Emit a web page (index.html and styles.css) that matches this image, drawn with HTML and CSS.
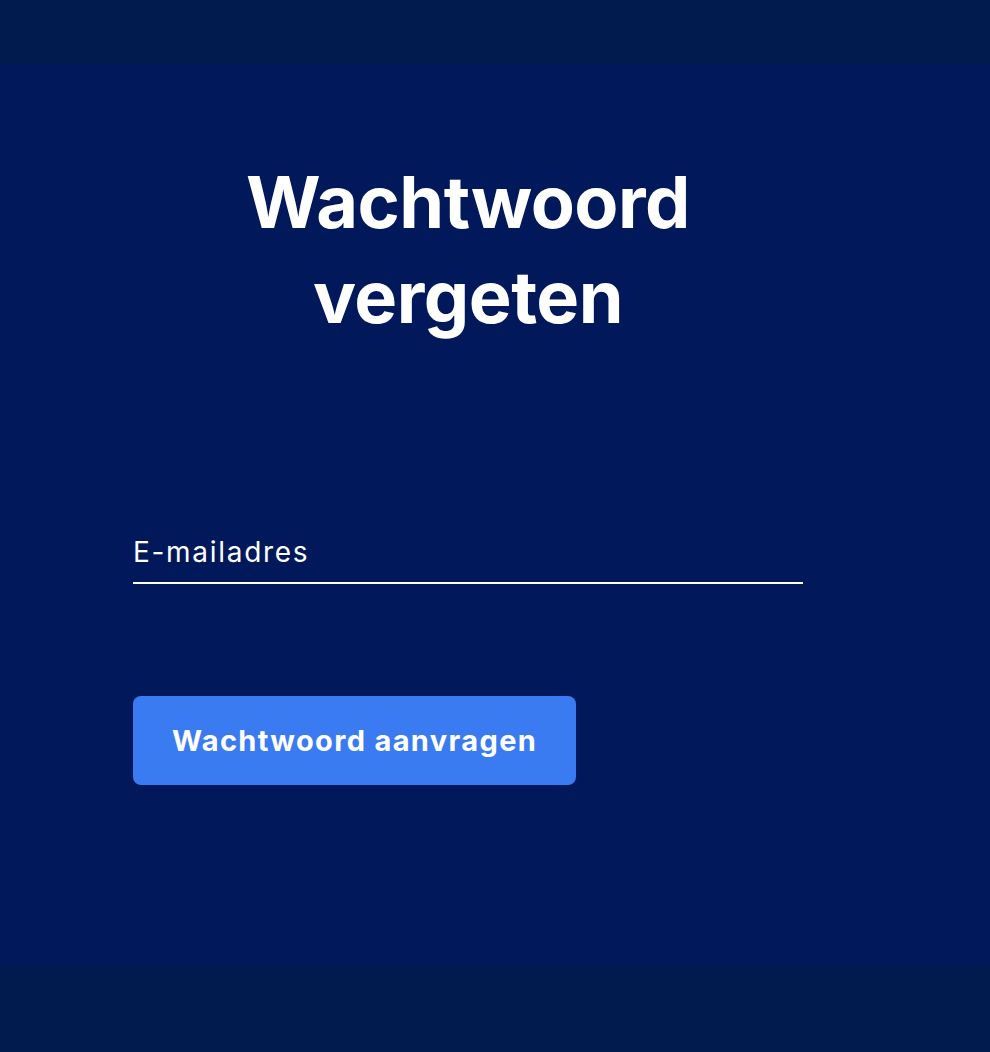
FILE: index.html
```html
<!DOCTYPE html>
<html lang="nl">
<head>
<meta charset="utf-8">
<title>Wachtwoord vergeten</title>
<link rel="stylesheet" href="styles.css">
</head>
<body>
<header class="topbar"></header>
<main class="main">
  <div class="panel">
    <h1 class="title">Wachtwoord vergeten</h1>
    <form class="form">
      <label class="field">
        <input class="input" type="email" placeholder="E-mailadres">
      </label>
      <button class="button" type="button">Wachtwoord aanvragen</button>
    </form>
  </div>
</main>
<footer class="footer"></footer>
</body>
</html>
```

FILE: styles.css
```css
html, body {
  margin: 0;
  padding: 0;
}
body {
  background: #01185a;
  font-family: Inter, "Noto Sans", sans-serif;
  color: #ffffff;
  width: 990px;
  height: 1052px;
  overflow: hidden;
  display: flex;
  flex-direction: column;
}
.topbar {
  height: 64px;
  background: #011b4e;
  flex: none;
}
.main {
  flex: 1;
  background: #01185a;
}
.footer {
  height: 87px;
  background: #011b4e;
  flex: none;
}
.panel {
  width: 670px;
  margin-left: 133px;
  padding-top: 90px;
}
.title {
  margin: 0;
  text-align: center;
  font-size: 72px;
  line-height: 95px;
  font-weight: 700;
  letter-spacing: -0.5px;
  padding: 0 110px;
}
.form {
  margin-top: 190px;
  display: flex;
  flex-direction: column;
  align-items: flex-start;
}
.field {
  display: block;
  width: 100%;
  border-bottom: 2px solid #ffffff;
}
.input {
  display: block;
  width: 100%;
  box-sizing: border-box;
  background: transparent;
  border: 0;
  outline: none;
  padding: 0 0 12px 0;
  margin: 0;
  font-family: inherit;
  font-size: 28px;
  line-height: 36px;
  letter-spacing: 1.7px;
  color: #ffffff;
}
.input::placeholder {
  color: #ffffff;
  opacity: 1;
}
.button {
  margin-top: 112px;
  height: 89px;
  padding: 0 39px;
  border: 0;
  border-radius: 8px;
  background: #3b7bf1;
  color: #ffffff;
  font-family: inherit;
  font-size: 29px;
  font-weight: 700;
  letter-spacing: 1.35px;
  cursor: pointer;
}
```
